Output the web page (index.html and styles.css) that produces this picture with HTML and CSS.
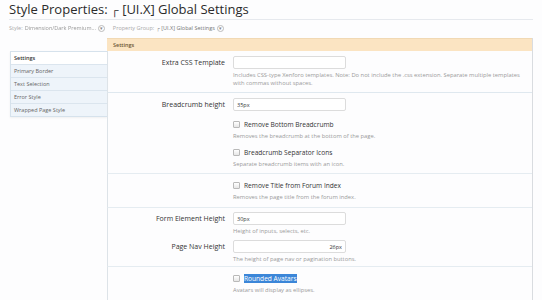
FILE: index.html
```html
<!DOCTYPE html>
<html lang="en">
<head>
    <meta charset="UTF-8">
    <title>Style Properties</title>
    <link rel="stylesheet" href="styles.css">
</head>
<body>
    <div class="titleBar">
        <h1>Style Properties: <span class="corner">┌</span> [UI.X] Global Settings</h1>
    </div>

    <div class="selectors">
        <span class="selLabel">Style:</span>
        <span class="selValue blurred">Dimension/Dark Premium...</span>
        <span class="dropIcon">▾</span>
        <span class="selLabel">Property Group:</span>
        <span class="selValue"><span class="smallCorner">┌</span> [UI.X] Global Settings</span>
        <span class="dropIcon">▾</span>
    </div>

    <div class="tabsArea">
        <ul class="sideTabs">
            <li class="active">Settings</li>
            <li>Primary Border</li>
            <li>Text Selection</li>
            <li>Error Style</li>
            <li>Wrapped Page Style</li>
        </ul>

        <div class="panel">
            <div class="panelHead">Settings</div>

            <div class="group g1">
                <div class="field">
                    <label class="fieldLabel">Extra CSS Template</label>
                    <div class="fieldBody">
                        <input type="text" class="textCtrl">
                        <p class="explain">Includes CSS-type Xenforo templates. Note: Do not include the .css extension. Separate multiple templates with commas without spaces.</p>
                    </div>
                </div>
            </div>

            <div class="group g2">
                <div class="field">
                    <label class="fieldLabel">Breadcrumb height</label>
                    <div class="fieldBody">
                        <input type="text" class="textCtrl" value="35px">
                    </div>
                </div>
                <div class="field check first">
                    <div class="fieldLabel"></div>
                    <div class="fieldBody">
                        <div class="checkRow"><span class="box"></span>Remove Bottom Breadcrumb</div>
                        <p class="explain">Removes the breadcrumb at the bottom of the page.</p>
                    </div>
                </div>
                <div class="field check">
                    <div class="fieldLabel"></div>
                    <div class="fieldBody">
                        <div class="checkRow"><span class="box"></span>Breadcrumb Separator Icons</div>
                        <p class="explain">Separate breadcrumb items with an icon.</p>
                    </div>
                </div>
            </div>

            <div class="group g3">
                <div class="field check">
                    <div class="fieldLabel"></div>
                    <div class="fieldBody">
                        <div class="checkRow"><span class="box"></span>Remove Title from Forum Index</div>
                        <p class="explain">Removes the page title from the forum index.</p>
                    </div>
                </div>
            </div>

            <div class="group g4">
                <div class="field">
                    <label class="fieldLabel">Form Element Height</label>
                    <div class="fieldBody">
                        <input type="text" class="textCtrl" value="30px">
                        <p class="explain">Height of inputs, selects, etc.</p>
                    </div>
                </div>
                <div class="field second">
                    <label class="fieldLabel">Page Nav Height</label>
                    <div class="fieldBody">
                        <input type="text" class="textCtrl right" value="26px">
                        <p class="explain">The height of page nav or pagination buttons.</p>
                    </div>
                </div>
            </div>

            <div class="group g5">
                <div class="field check">
                    <div class="fieldLabel"></div>
                    <div class="fieldBody">
                        <div class="checkRow"><span class="box"></span><span class="picked">Rounded Avatars</span></div>
                        <p class="explain">Avatars will display as ellipses.</p>
                    </div>
                </div>
            </div>
        </div>
    </div>
</body>
</html>
```

FILE: styles.css
```css
body {
    margin: 0;
    background-color: #fdfdfe;
    font-family: 'Open Sans', 'Noto Sans', sans-serif;
    color: #333;
    overflow: hidden;
}
.titleBar {
    margin: 0 9px;
    height: 19px;
    border-bottom: 1px solid #e6e9ee;
}
h1 {
    margin: 0;
    padding-top: 1px;
    font-size: 13px;
    font-weight: normal;
    line-height: 17px;
    color: #2b2b2b;
}
.corner {
    font-size: 11px;
}
.selectors {
    margin: 3px 0 0 9px;
    height: 10px;
    font-size: 5.5px;
    line-height: 10px;
    color: #aaa;
    display: flex;
    align-items: center;
    gap: 2px;
}
.selValue {
    color: #777;
}
.blurred {
    filter: blur(0.4px);
    color: #999;
}
.smallCorner {
    font-size: 5px;
}
.dropIcon {
    display: inline-block;
    width: 5px;
    height: 5px;
    border: 1px solid #bbb;
    border-radius: 50%;
    font-size: 5px;
    line-height: 5px;
    text-align: center;
    color: #888;
    margin-right: 6px;
}
.tabsArea {
    display: flex;
    margin: 5px 0 0 10px;
}
.sideTabs {
    list-style: none;
    margin: 13px 0 0 0;
    padding: 0;
    width: 96px;
    height: 64px;
    border: 1px solid #d6e2ec;
    border-right: none;
    box-shadow: 0 1px 2px rgba(0,0,0,0.06);
    align-self: flex-start;
}
.sideTabs li {
    height: 12px;
    line-height: 12px;
    padding-left: 3px;
    font-size: 5.5px;
    color: #666;
    background-color: #eef4fa;
    border-bottom: 1px solid #dbe5ee;
}
.sideTabs li:last-child {
    border-bottom: none;
}
.sideTabs li.active {
    background-color: #fff;
    color: #333;
    font-weight: 600;
}
.panel {
    width: 425px;
    height: 262px;
    border-right: 1px solid #d9dce0;
}
.panelHead {
    height: 12px;
    line-height: 12px;
    padding-left: 6px;
    font-size: 5.5px;
    font-weight: 600;
    color: #6b5433;
    background-color: #fbe4c2;
    border-top: 1px solid #f1d9b4;
}
.group {
    border-left: 1px solid #dde3e8;
}
.g1 { padding: 5px 0 5px; border-bottom: 1px solid #dfe8ef; }
.g2 { padding: 5px 0 5px; border-bottom: 1px solid #e5ecf1; }
.g3 { padding: 6px 0 6px; border-bottom: 1px solid #e5ecf1; }
.g4 { padding: 4px 0 3px; border-bottom: 1px solid #e5ecf1; }
.g5 { padding: 6px 0 10px; }
.field {
    display: flex;
}
.field.check.first {
    margin-top: 8px;
}
.field.check + .field.check {
    margin-top: 7px;
}
.field.second {
    margin-top: 5px;
}
.fieldLabel {
    width: 117px;
    padding-right: 8px;
    flex-shrink: 0;
    text-align: right;
    font-size: 7px;
    line-height: 13px;
    color: #333;
}
.fieldBody {
    flex: 1;
    padding-right: 6px;
}
.textCtrl {
    display: block;
    box-sizing: border-box;
    width: 113px;
    height: 13px;
    margin: 0;
    padding: 0 3px;
    border: 1px solid #dcdcdc;
    border-radius: 2px;
    background-color: #fff;
    font-family: inherit;
    font-size: 5.5px;
    color: #333;
}
.textCtrl.right {
    text-align: right;
}
.explain {
    margin: 2px 0 0 0;
    font-size: 5.8px;
    line-height: 8px;
    color: #9a9a9a;
}
.checkRow {
    display: flex;
    align-items: center;
    height: 10px;
    font-size: 6.6px;
    color: #333;
}
.check .explain {
    margin-top: 3px;
}
.box {
    display: inline-block;
    width: 5px;
    height: 5px;
    margin-right: 4px;
    border: 1px solid #b9b9b9;
    border-radius: 1px;
    background: linear-gradient(#fff, #e6e6e6);
}
.picked {
    background-color: #3b86d8;
    color: #fff;
}
```
